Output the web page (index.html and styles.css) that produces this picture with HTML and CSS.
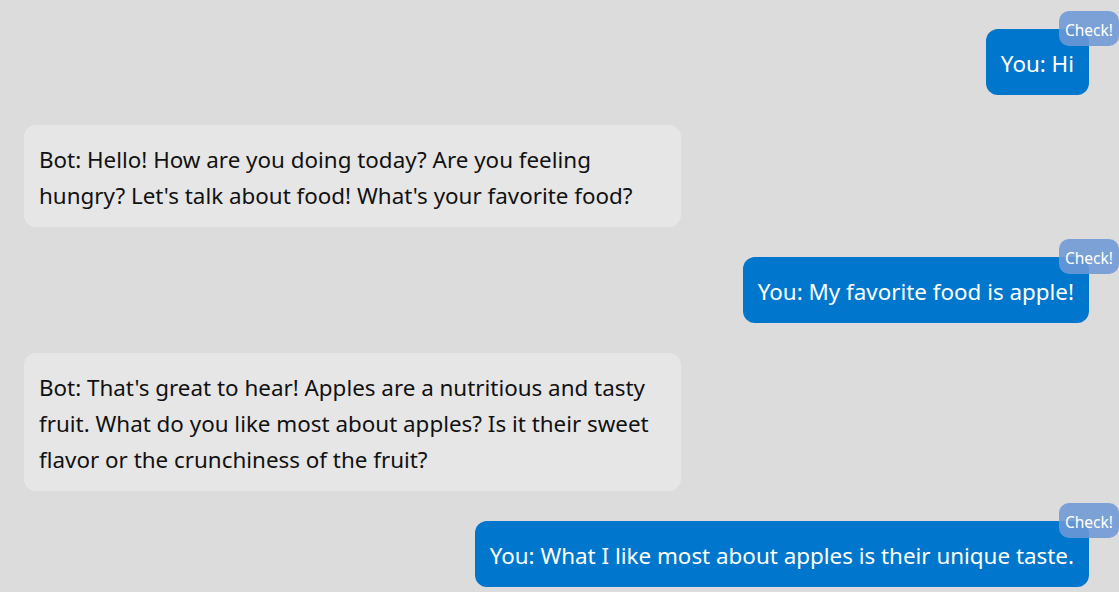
FILE: index.html
```html
<!DOCTYPE html>
<html>
<head>
<meta charset="utf-8">
<link rel="stylesheet" href="styles.css">
</head>
<body>
<div class="chat">
  <div class="msg user"><span class="text">You: Hi</span><span class="check">Check!</span></div>
  <div class="msg bot"><span class="text">Bot: Hello! How are you doing today? Are you feeling hungry? Let's talk about food! What's your favorite food?</span></div>
  <div class="msg user"><span class="text">You: My favorite food is apple!</span><span class="check">Check!</span></div>
  <div class="msg bot"><span class="text">Bot: That's great to hear! Apples are a nutritious and tasty fruit. What do you like most about apples? Is it their sweet flavor or the crunchiness of the fruit?</span></div>
  <div class="msg user"><span class="text">You: What I like most about apples is their unique taste.</span><span class="check">Check!</span></div>
</div>
</body>
</html>
```

FILE: styles.css
```css
html, body {
  margin: 0;
  padding: 0;
  background: #dcdcdc;
  overflow: hidden;
}
body {
  font-family: "Segoe UI", "Noto Sans", "Open Sans", sans-serif;
}
.chat {
  display: flex;
  flex-direction: column;
  gap: 30px;
  padding: 29px 0 0 24px;
}
.msg {
  position: relative;
  max-width: 60%;
  box-sizing: border-box;
  padding: 17px 15px 13px;
  border-radius: 12px;
  font-size: 22.4px;
  line-height: 36px;
}
.user {
  align-self: flex-end;
  margin-right: 30px;
  background: #0077cc;
  color: #ffffff;
}
.bot {
  align-self: flex-start;
  background: #e6e6e6;
  color: #111111;
}
.check {
  position: absolute;
  top: -18px;
  right: -30px;
  padding: 8px 6px 4px;
  border-radius: 10px;
  background: rgba(110, 152, 214, 0.88);
  color: #ffffff;
  font-size: 15.5px;
  line-height: 23px;
}
```
